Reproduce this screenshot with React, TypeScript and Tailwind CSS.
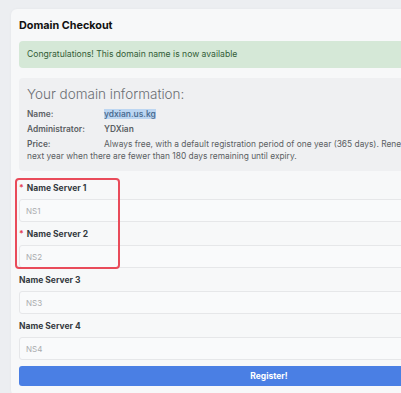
import React from "react";

const font = { fontFamily: "Inter, 'Open Sans', sans-serif" };

function Field({ label, ph, req }: { label: string; ph: string; req?: boolean }) {
  return (
    <div className="flex flex-col">
      <div className="h-[12px] flex items-center text-[8.5px] font-bold text-[#343a40] leading-none">
        {req && <span className="text-[#e5414f] mr-[3px]">*</span>}
        {label}
      </div>
      <div className="mt-[5px] h-[23px] rounded-[3px] border border-[#e6e7e9] bg-[#f9fafb] flex items-center pl-[6px] text-[8px] text-[#a9abae]">
        {ph}
      </div>
    </div>
  );
}

export default function App() {
  return (
    <div className="w-[401px] h-[393px] overflow-hidden bg-[#eceef1] relative" style={font}>
      <div className="ml-[11px] mt-[9px] w-[516px] rounded-[6px] bg-[#f7f8f9] px-[8px] pt-[10px] pb-[10px] shadow-[0_0_3px_rgba(0,0,0,0.04)] relative">
        <div className="h-[14px] flex items-center text-[10.8px] font-bold text-[#111] leading-none">Domain Checkout</div>
        <div className="mt-[8px] h-[27px] rounded-[4px] bg-[#d5e8d7] flex items-center pl-[8px] text-[8.6px] text-[#325c36]">
          Congratulations! This domain name is now available
        </div>
        <div className="mt-[10px] rounded-[4px] bg-[#eff0f2] px-[8px] pt-[8px] pb-[9px] text-[8.4px] text-[#5b5f63]">
          <div className="h-[18px] flex items-center text-[13.5px] font-light text-[#6b6e72] leading-none">Your domain information:</div>
          <div className="mt-[5px] leading-[11px]">
            <span className="inline-block w-[77px] font-semibold">Name:</span>
            <span className="font-semibold bg-[#bcd6f2] text-[#4e6e92]">ydxian.us.kg</span>
          </div>
          <div className="mt-[4px] leading-[11px]">
            <span className="inline-block w-[77px] font-semibold">Administrator:</span>
            <span className="font-semibold">YDXian</span>
          </div>
          <div className="mt-[3px] leading-[12px]">
            <span className="inline-block w-[77px] font-semibold">Price:</span>
            Always free, with a default registration period of one year (365 days). Renew for the
            <br />
            next year when there are fewer than 180 days remaining until expiry.
          </div>
        </div>
        <div className="mt-[11px] flex flex-col gap-[6px]">
          <Field label="Name Server 1" ph="NS1" req />
          <Field label="Name Server 2" ph="NS2" req />
          <Field label="Name Server 3" ph="NS3" />
          <Field label="Name Server 4" ph="NS4" />
        </div>
        <button className="mt-[6px] w-full h-[20px] rounded-[3px] bg-[#4a7fe4] text-white text-[8.5px] font-bold flex items-center justify-center">
          Register!
        </button>
        <div className="absolute left-[4px] top-[169px] w-[105px] h-[91px] rounded-[4px] border-2 border-[#e94b5a] pointer-events-none" />
      </div>
    </div>
  );
}
